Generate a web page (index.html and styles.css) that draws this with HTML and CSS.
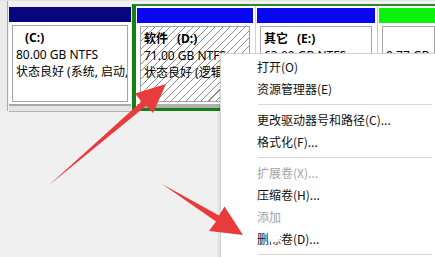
FILE: index.html
```html
<!DOCTYPE html>
<html lang="zh-CN">
<head>
<meta charset="utf-8">
<title>磁盘管理</title>
<link rel="stylesheet" href="styles.css">
</head>
<body>
<div class="screen">
  <div class="disk">
    <div class="lead"></div>
    <div class="part primary">
      <div class="bar navy"></div>
      <div class="body">
        <div class="box">
          <div class="name pad">(C:)</div>
          <div>80.00 GB NTFS</div>
          <div>状态良好 (系统, 启动, 页面文件, 活动, 故障转储, 主分区)</div>
        </div>
      </div>
      <div class="band"></div>
    </div>
    <div class="ext">
      <div class="part logical d">
        <div class="bar blue"></div>
        <div class="body">
          <div class="box hatch">
            <div class="name">软件<span class="drv">(D:)</span></div>
            <div>71.00 GB NTFS</div>
            <div>状态良好 (逻辑驱动器)</div>
          </div>
        </div>
        <div class="band"></div>
      </div>
      <div class="part logical e">
        <div class="bar blue"></div>
        <div class="body">
          <div class="box">
            <div class="name">其它<span class="drv">(E:)</span></div>
            <div>63.00 GB NTFS</div>
            <div>状态良好 (逻辑驱动器)</div>
          </div>
        </div>
        <div class="band"></div>
      </div>
      <div class="part logical free">
        <div class="bar lime"></div>
        <div class="body">
          <div class="box">
            <div class="name">&nbsp;</div>
            <div>9.77 GB</div>
            <div>可用空间</div>
          </div>
        </div>
        <div class="band"></div>
      </div>
    </div>
  </div>

  <div class="menu">
    <div class="item">打开(O)</div>
    <div class="item">资源管理器(E)</div>
    <div class="sep"></div>
    <div class="item">更改驱动器号和路径(C)...</div>
    <div class="item">格式化(F)...</div>
    <div class="sep"></div>
    <div class="item off">扩展卷(X)...</div>
    <div class="item">压缩卷(H)...</div>
    <div class="item off">添加镜像(A)...</div>
    <div class="item">删除卷(D)...</div>
    <div class="sep"></div>
  </div>

  <div class="smear s1"></div>
  <div class="smear s2"></div>

  <svg class="arrows" width="435" height="257" viewBox="0 0 435 257" aria-hidden="true">
    <polygon fill="#e83c3c" points="48,186 141.5,101.5 135,93.5 166,84 153,113 146.2,105.8"/>
    <polygon fill="#e83c3c" points="162,184 219,215.5 224.5,206.5 243,235 209,231 216,221.5"/>
  </svg>
</div>
</body>
</html>
```

FILE: styles.css
```css
* { box-sizing: border-box; }

html, body {
  margin: 0;
  padding: 0;
}

body {
  background: #f0f0f0;
  font-family: "Noto Sans", "Noto Sans CJK SC", sans-serif;
  font-size: 12px;
  color: #000;
}

.screen {
  position: relative;
  width: 435px;
  height: 257px;
  overflow: hidden;
}

.disk {
  display: flex;
  height: 113px;
  padding-top: 3px;
  border-top: 1px solid #e2e2e2;
}

.lead {
  width: 8px;
  flex: none;
  background: #ebebeb;
  border-right: 1px solid #a9a9a9;
  margin-top: -3px;
  height: 110px;
}

.part {
  display: flex;
  flex-direction: column;
  flex: none;
}

.part.primary {
  width: 122px;
  margin-left: 1px;
  margin-top: 3px;
  height: 105px;
  background: #fff;
}

.bar {
  height: 15px;
  flex: none;
}
.navy { background: #06067e; }
.blue { background: #0707f2; }
.lime { background: #0af20a; }

.body {
  flex: 1;
  background: #fff;
  padding: 3px 3px 2px;
  display: flex;
}

.box {
  flex: 1;
  border: 1px solid #a4a4a4;
  padding: 3px 0 0 3px;
  line-height: 17px;
  white-space: nowrap;
  overflow: hidden;
}

.name { font-weight: bold; }
.name.pad { padding-left: 9px; }
.drv { margin-left: 9px; }

.band {
  height: 8px;
  flex: none;
  border-top: 2px solid #a9a9a9;
  background: #e4e4e4;
  border-bottom: 1px solid #b4b4b4;
}

.ext {
  display: flex;
  flex: 1;
  margin-left: 1px;
  height: 107px;
  border-left: 4px solid #167f16;
  border-top: 2px solid #2a8a2a;
  border-bottom: 3px solid #167f16;
  background: #fff;
}

.part.logical {
  padding-top: 2px;
  height: 100%;
}

.part.logical .band {
  height: 4px;
  border-bottom: none;
  background: #b0b0b0;
  border-top: none;
}

.part.d {
  width: 120px;
  padding-left: 1px;
  padding-right: 2px;
  border-right: 1px solid #c8d8c8;
}
.part.e {
  width: 122px;
  padding-left: 1px;
  padding-right: 2px;
  border-right: 1px solid #c8c8c8;
}
.part.free {
  flex: 1;
  padding-left: 1px;
}

.hatch {
  background: repeating-linear-gradient(135deg, #ffffff 0 4.3px, #8c8c8c 4.3px 5.3px);
}

.menu {
  position: absolute;
  left: 220px;
  top: 53px;
  right: -4px;
  bottom: -10px;
  background: #fff;
  border: 1px solid #d2d2d2;
  box-shadow: -1px 1px 3px rgba(0, 0, 0, 0.12);
  padding-top: 2px;
  font-family: "Noto Sans CJK SC", sans-serif;
  font-size: 12px;
}

.item {
  height: 22px;
  line-height: 22px;
  padding-left: 36px;
  white-space: nowrap;
  color: #111;
}
.item.off { color: #a3a3a3; }

.sep {
  height: 9px;
  margin-left: 37px;
  margin-right: 6px;
  position: relative;
}
.sep::after {
  content: "";
  position: absolute;
  left: 0;
  right: 0;
  top: 4px;
  height: 1px;
  background: #d6d6d6;
}

.smear {
  position: absolute;
  background: #fff;
  border-radius: 4px;
}
.s1 { left: 281px; top: 207px; width: 70px; height: 20px; }
.s2 { left: 268px; top: 230px; width: 12px; height: 12px; }

.arrows {
  position: absolute;
  left: 0;
  top: 0;
  pointer-events: none;
}
```
